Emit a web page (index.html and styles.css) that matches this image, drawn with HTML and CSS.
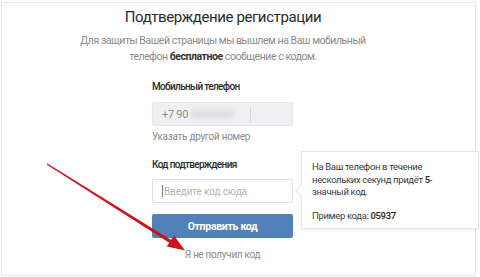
FILE: index.html
```html
<!DOCTYPE html>
<html lang="ru">
<head>
<meta charset="utf-8">
<link rel="stylesheet" href="styles.css">
</head>
<body>
<div class="frame">
  <div class="content">
    <h1 class="title">Подтверждение регистрации</h1>
    <p class="lead">Для защиты Вашей страницы мы вышлем на Ваш мобильный<br>телефон <b>бесплатное</b> сообщение с кодом.</p>
    <div class="form">
      <div class="label">Мобильный телефон</div>
      <div class="phone">
        <span class="prefix">+7 90</span>
        <span class="blur"></span>
        <span class="sep"></span>
      </div>
      <div class="link">Указать другой номер</div>
      <div class="label label-code">Код подтверждения</div>
      <div class="code-wrap">
        <div class="code"><span class="caret"></span><span class="ph">Введите код сюда</span></div>
        <div class="tip">
          <p>На Ваш телефон в течение<br>нескольких секунд придёт <b>5</b>-<br>значный код.</p>
          <p class="example">Пример кода: <b>05937</b></p>
        </div>
      </div>
      <div class="btn">Отправить код</div>
      <div class="nocode">Я не получил код</div>
    </div>
  </div>
  <svg class="arrow" width="480" height="277" viewBox="0 0 480 277">
    <polygon points="46.6,164.5 47.4,163.5 171.6,240.2 169.6,243.0" fill="#c9151f"/>
    <polygon points="185,250.5 166.8,246.6 174.0,235.6" fill="#c9151f"/>
  </svg>
</div>
</body>
</html>
```

FILE: styles.css
```css
* { box-sizing: border-box; }
html, body { margin: 0; padding: 0; background: #fff; }
body {
  width: 480px;
  height: 277px;
  overflow: hidden;
  font-family: Roboto, "Open Sans", Arial, sans-serif;
  position: relative;
}
.frame {
  position: absolute;
  left: 1px;
  top: 2px;
  width: 475px;
  height: 274px;
  border: 1px solid #e6e6e6;
}
.content {
  width: 442px;
  display: flex;
  flex-direction: column;
  align-items: center;
}
.title {
  margin: 3px 0 0;
  font-size: 15px;
  font-weight: 400;
  color: #2a2a2a;
  line-height: 22px;
  letter-spacing: -0.4px;
}
.lead {
  margin: 5px 0 0;
  font-size: 10.5px;
  line-height: 16px;
  color: #8a8a8a;
  text-align: center;
  letter-spacing: -0.45px;
}
.lead b { color: #333; font-weight: 700; }
.form {
  align-self: flex-start;
  margin-left: 150px;
  margin-top: 15px;
  width: 141px;
  display: flex;
  flex-direction: column;
}
.label {
  font-size: 10px;
  font-weight: 500;
  color: #2a2a2a;
  line-height: 14px;
  letter-spacing: -0.65px;
}
.phone {
  margin-top: 8px;
  height: 24px;
  background: #eef0f3;
  border: 1px solid #e5e7ea;
  border-radius: 2px;
  display: flex;
  align-items: center;
  padding-left: 9px;
}
.prefix { font-size: 11px; color: #8d8d8d; letter-spacing: -0.3px; }
.blur {
  width: 44px;
  height: 10px;
  margin-left: 2px;
  background: #dfe2e6;
  border-radius: 5px;
  filter: blur(2px);
}
.sep {
  width: 1px;
  height: 15px;
  margin-left: 16px;
  background: #d4d6da;
}
.link {
  margin-top: 4px;
  font-size: 10px;
  color: #8a8a8a;
  line-height: 14px;
  letter-spacing: -0.3px;
}
.label-code { margin-top: 14px; }
.code-wrap { position: relative; margin-top: 7px; }
.code {
  height: 24px;
  border: 1px solid #dcdfe3;
  border-radius: 2px;
  background: #fff;
  display: flex;
  align-items: center;
  padding-left: 9px;
}
.caret { width: 1px; height: 12px; background: #777; margin-right: 1px; }
.ph { font-size: 10px; color: #b3b3b3; letter-spacing: -0.15px; }
.tip {
  position: absolute;
  left: 149px;
  top: -28px;
  width: 178px;
  height: 78px;
  background: #fff;
  border: 1px solid #e3e5e8;
  box-shadow: 0 1px 3px rgba(0,0,0,0.08);
  padding: 9px 10px;
  font-size: 9.5px;
  line-height: 12.5px;
  color: #3a3a3a;
  letter-spacing: -0.35px;
}
.tip::before {
  content: "";
  position: absolute;
  left: -5px;
  top: 34px;
  width: 8px;
  height: 8px;
  background: #fff;
  border-left: 1px solid #e3e5e8;
  border-bottom: 1px solid #e3e5e8;
  transform: rotate(45deg);
}
.tip p { margin: 0; }
.tip .example { margin-top: 11px; }
.tip b { font-weight: 500; color: #222; }
.btn {
  margin-top: 11px;
  height: 24px;
  background: #5181b8;
  border-radius: 2px;
  color: #fff;
  font-size: 10.5px;
  font-weight: 700;
  letter-spacing: -0.3px;
  display: flex;
  align-items: center;
  justify-content: center;
}
.nocode {
  margin-top: 10px;
  text-align: center;
  font-size: 10px;
  color: #8a8a8a;
  line-height: 14px;
  letter-spacing: -0.3px;
}
.arrow {
  position: absolute;
  left: -2px;
  top: -3px;
}
```
